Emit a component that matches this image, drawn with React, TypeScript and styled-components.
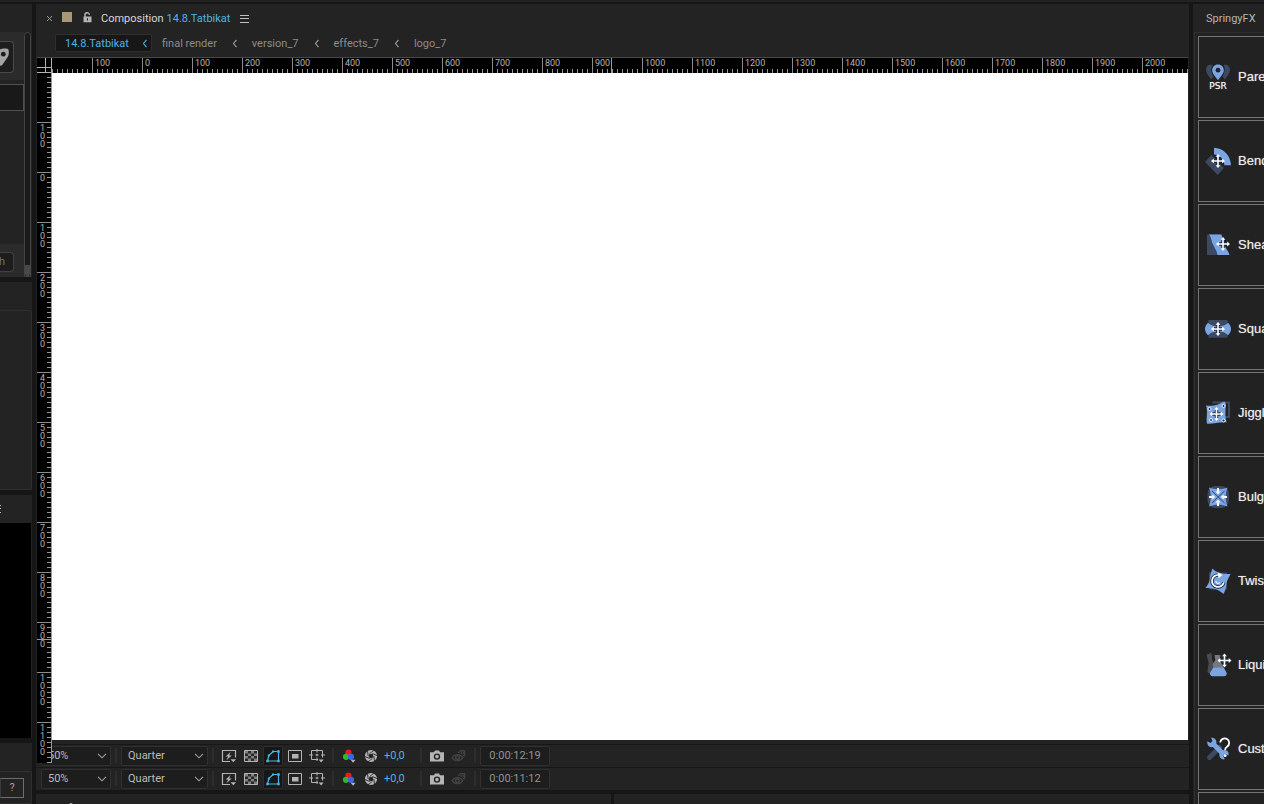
import React from "react";
import styled, { createGlobalStyle } from "styled-components";

const c = {
  gap: "#161616",
  panel: "#232323",
  raised: "#2b2b2b",
  sunken: "#1d1d1d",
  edge: "#303030",
  text: "#a0a0a0",
  bright: "#d6d6d6",
  blue: "#4bb4e6",
  icon: "#b4b4b4",
  springBlue: "#7ba4e2",
  springDark: "#3d4961",
};

const GlobalStyle = createGlobalStyle`
  *, *::before, *::after { box-sizing: border-box; }
  html, body { margin: 0; height: 100%; overflow: hidden; background: ${c.gap}; }
  body { font: 11px/16px Roboto, "Open Sans", sans-serif; color: ${c.text}; }
  button, select, input { font: inherit; color: inherit; margin: 0; }
  svg { display: block; flex: none; }
`;

/* ---------- shell ---------- */

const Shell = styled.div`
  display: flex;
  flex-direction: column;
  height: 100vh;
  overflow: hidden;
`;

const TopStrip = styled.div`
  flex: none;
  height: 2px;
  margin-bottom: 2px;
  background: ${c.panel};
`;

const Workspace = styled.div`
  flex: 1;
  min-height: 0;
  display: grid;
  grid-template-columns: 32px minmax(0, 1fr) 71px;
  column-gap: 4px;
`;

/* ---------- left column ---------- */

const SideColumn = styled.aside`
  display: flex;
  flex-direction: column;
  gap: 5px;
  min-height: 0;
  overflow: hidden;
`;

const SidePanel = styled.section<{ $height?: number }>`
  flex: ${(p) => (p.$height ? "none" : "1")};
  height: ${(p) => (p.$height ? p.$height + "px" : "auto")};
  min-height: 0;
  display: flex;
  flex-direction: column;
  overflow: hidden;
  background: ${c.panel};
`;

const Scroller = styled.div`
  flex: 1;
  display: flex;
  margin-top: 28px;
`;

const ScrollBody = styled.div`
  width: 24px;
  display: flex;
  flex-direction: column;
  justify-content: space-between;
`;

const Band = styled.div<{ $top: number; $bottom: number }>`
  background: ${c.raised};
  padding: ${(p) => p.$top}px 0 ${(p) => p.$bottom}px;
`;

const KeyButton = styled.button`
  display: flex;
  align-items: center;
  width: 14px;
  height: 32px;
  padding: 0;
  border: 1px solid #4a4a4a;
  border-left: 0;
  border-radius: 0 4px 4px 0;
  background: ${c.sunken};
`;

const SideInput = styled.input`
  display: block;
  width: 24px;
  height: 27px;
  margin-top: 4px;
  padding: 0;
  border: 1px solid #505050;
  border-left: 0;
  background: #191919;
`;

const ClippedButton = styled.button`
  display: flex;
  justify-content: flex-end;
  align-items: center;
  width: 14px;
  height: 20px;
  padding: 0 8px 0 0;
  overflow: hidden;
  border: 1px solid #404040;
  border-left: 0;
  border-radius: 0 4px 4px 0;
  background: ${c.sunken};
  color: #707070;
`;

const ScrollTrack = styled.div`
  display: flex;
  flex-direction: column;
  justify-content: flex-end;
  width: 7px;
  border: 1px solid #444;
  border-radius: 4px 4px 0 0;
  background: #1b1b1b;
`;

const ScrollThumb = styled.div`
  height: 11px;
  background: #484848;
  border-radius: 0 0 2px 2px;
`;

const FramedBody = styled.div`
  flex: 1;
  margin-top: 28px;
  border: 1px solid ${c.edge};
  border-left: 0;
  border-radius: 0 2px 2px 0;
`;

const PreviewHead = styled.div`
  height: 28px;
  display: flex;
  align-items: center;
`;

const Preview = styled.div`
  flex: 1;
  margin-right: 1px;
  background: #000;
`;

const HelpButton = styled.button`
  display: block;
  width: 24px;
  height: 20px;
  margin-top: 6px;
  padding: 0;
  border: 1px solid #6e6e6e;
  border-left-color: #3a3a3a;
  background: ${c.panel};
`;

/* ---------- composition panel ---------- */

const Main = styled.main`
  display: flex;
  flex-direction: column;
  min-width: 0;
  min-height: 0;
`;

const CompPanel = styled.section`
  flex: 1;
  min-height: 0;
  display: flex;
  flex-direction: column;
  background: ${c.panel};
`;

const TabRow = styled.header`
  flex: none;
  display: flex;
  align-items: center;
  height: 28px;
  padding: 1px 0 0 10px;
`;

const PlainButton = styled.button`
  display: flex;
  align-items: center;
  padding: 0;
  border: 0;
  background: none;
  white-space: nowrap;
`;

const Swatch = styled.span`
  width: 10px;
  height: 10px;
  margin: 0 11px 3px 9px;
  background: #a99877;
`;

const LockButton = styled(PlainButton)`
  padding-bottom: 3px;
`;

const TabTitle = styled.h1`
  display: flex;
  gap: 3px;
  margin: 0 10px 0 9px;
  font: inherit;
  color: ${c.bright};
  white-space: nowrap;
`;

const Accent = styled.span`
  color: ${c.blue};
`;

const Crumbs = styled.nav`
  flex: none;
  display: flex;
  align-items: center;
  gap: 14px;
  height: 24px;
  padding: 2px 0 4px 19px;
`;

const Crumb = styled(PlainButton)`
  padding: 1px 1px 0 0;
  color: #8c8c8c;
`;

const CurrentCrumb = styled(PlainButton)`
  justify-content: space-between;
  width: 97px;
  height: 18px;
  margin-right: -4px;
  padding: 1px 3px 0 9px;
  border: 1px solid #2f2f2f;
  border-radius: 2px;
  background: #171717;
  color: ${c.blue};
`;

const Viewer = styled.div`
  flex: 1;
  min-height: 0;
  display: grid;
  grid-template: 15px minmax(0, 1fr) / 15px minmax(0, 1fr);
  margin: 1px 1px 4px;
  border-top: 1px solid #484848;
`;

const Corner = styled.div`
  background: #000;
`;

const tick = "#989898";

const RulerX = styled.div`
  position: relative;
  display: flex;
  padding-left: 40px;
  overflow: hidden;
  background: linear-gradient(90deg, ${tick} 1px, transparent 1px) 0 100% / 5px 4px repeat-x #000;
`;

const MarkX = styled.span`
  flex: none;
  width: 50px;
  padding-left: 2px;
  border-left: 1px solid #8c8c8c;
  font-size: 9px;
  line-height: 11px;
  color: #b4b4b4;
`;

const CursorX = styled.i`
  position: absolute;
  top: 0;
  bottom: 0;
  left: 559px;
  width: 1px;
  background: ${c.blue};
`;

/* The vertical ruler hangs over the first footer bar. */
const RulerY = styled.div`
  position: relative;
  z-index: 1;
  margin-bottom: -23px;
  padding-top: 49px;
  overflow: hidden;
  border-right: 1px solid ${tick};
  background: linear-gradient(${tick} 1px, transparent 1px) 100% 4px / 4px 5px repeat-y #000;
`;

const MarkY = styled.span`
  display: block;
  height: 50px;
  padding: 1px 0 0 3px;
  border-top: 1px solid #8c8c8c;
  font-size: 9px;
  line-height: 8px;
  color: #b4b4b4;
`;

const Stacked = styled.span`
  display: block;
  width: 6px;
  word-break: break-all;
`;

const CursorY = styled.i`
  position: absolute;
  left: 0;
  right: 0;
  top: 566px;
  height: 1px;
  background: ${c.blue};
`;

const Canvas = styled.div`
  background: #fff;
`;

const Bar = styled.div`
  flex: none;
  display: flex;
  align-items: center;
  height: 23px;
  padding: 0 0 1px 5px;
  border-top: 1px solid #171717;
`;

const Picker = styled.label<{ $width: number }>`
  position: relative;
  display: flex;
  width: ${(p) => p.$width}px;
`;

const PickerSelect = styled.select`
  width: 100%;
  height: 20px;
  padding: 0 20px 0 6px;
  appearance: none;
  border: 1px solid ${c.edge};
  border-radius: 2px;
  background: ${c.sunken};
  color: #bcbcbc;
`;

const PickerArrow = styled.svg`
  position: absolute;
  top: 7px;
  right: 4px;
  pointer-events: none;
`;

const Rule = styled.i`
  width: 2px;
  height: 15px;
  margin: 0 4px;
  background: #2d2d2d;
`;

const Group = styled.div`
  display: flex;
  gap: 2px;
  padding: 0 1px;
`;

const ToolButton = styled.button<{ $on?: boolean }>`
  display: flex;
  align-items: center;
  justify-content: center;
  width: 20px;
  height: 20px;
  padding: 0;
  border: 1px solid ${(p) => (p.$on ? "#2c2c2c" : "transparent")};
  border-radius: 2px;
  background: ${(p) => (p.$on ? "#171717" : "none")};
`;

const Exposure = styled.button`
  width: 32px;
  height: 20px;
  padding: 0 0 0 1px;
  border: 0;
  background: none;
  color: ${c.blue};
  text-align: left;
`;

const TimeButton = styled.button`
  width: 70px;
  height: 20px;
  padding: 0;
  border: 1px solid ${c.edge};
  border-radius: 2px;
  background: ${c.sunken};
  color: #929292;
`;

const LowerPanels = styled.div`
  flex: none;
  display: grid;
  grid-template-columns: 1fr 1fr;
  gap: 3px;
  height: 10px;
  margin-top: 4px;
`;

const LowerPanel = styled.section`
  padding: 8px 0 0 32px;
  overflow: hidden;
  background: ${c.panel};
`;

/* ---------- SpringyFX panel ---------- */

const SpringPanel = styled.aside`
  display: flex;
  flex-direction: column;
  min-height: 0;
  overflow: hidden;
  background: ${c.panel};
`;

const SpringTitle = styled.h2`
  flex: none;
  height: 28px;
  margin: 0;
  padding: 1px 0 0 13px;
  font: inherit;
  line-height: 28px;
  color: #b4b4b4;
`;

const SpringList = styled.div`
  flex: 1;
  display: flex;
  flex-direction: column;
  gap: 2px;
  margin-left: 1px;
  padding: 3px 0 0 3px;
  border: 1px solid #2e2e2e;
  border-width: 1px 0 0 1px;
`;

const SpringButton = styled.button`
  flex: none;
  display: flex;
  align-items: center;
  gap: 6px;
  width: 180px;
  height: 82px;
  padding: 0 5px;
  border: 1px solid #747474;
  background: #222;
  color: #ececec;
  font: 13px/16px "Liberation Sans", Arial, sans-serif;
  text-shadow: 0 0 1px #999;
`;

/* ---------- drawings ---------- */

const Arrow = () => (
  <svg width="6" height="9" viewBox="0 0 6 9" fill="none" stroke="currentColor" strokeWidth="1.1">
    <path d="M4.5 .8 1.5 4.5 4.5 8.2" />
  </svg>
);

const Lines = () => (
  <svg width="9" height="8" viewBox="0 0 9 8" fill="#bdbdbd">
    <path d="M0 0h9v1H0zM0 3h9v1H0zM0 7h9v1H0z" />
  </svg>
);

const Lock = () => (
  <svg width="9" height="11" viewBox="0 0 9 11">
    <path d="M2 5V3.2a2.2 2.2 0 0 1 4.4-.4" fill="none" stroke="#b4b4b4" strokeWidth="1.4" />
    <path d="M.5 4.6h8v5.6h-8zM4 6.2v2.4h1V6.2z" fill="#b4b4b4" fillRule="evenodd" />
  </svg>
);

const FastPreview = () => (
  <svg width="16" height="14" viewBox="0 0 16 14">
    <path d="M9 12.5H1.5v-11h13v7" fill="none" stroke={c.icon} strokeWidth="1.2" />
    <path d="M9.6 3 4.6 7.6h2.6L5.4 11.2l5.4-4.800H8.100z" fill={c.icon} />
    <path d="M9.500 10.200h5.500l-2.700 3z" fill={c.icon} />
  </svg>
);

const Checker = () => (
  <svg width="14" height="12" viewBox="0 0 14 12">
    <path d="M.5.5h13v11H.5z" fill="#2a2a2a" stroke={c.icon} />
    <path
      d="M1 1h3v2.500H1zM7 1h3v2.500H7zM4 3.500h3V6H4zM10 3.500h3V6h-3zM1 6h3v2.500H1zM7 6h3v2.500H7zM4 8.500h3V11H4zM10 8.500h3V11h-3z"
      fill="#808080"
    />
  </svg>
);

const MaskShape = () => (
  <svg width="14" height="14" viewBox="0 0 14 14">
    <path d="M1.500 12 2.800 6.500 7 2.500h5.500V12z" fill="none" stroke={c.blue} strokeWidth="1.200" />
    <path
      d="M.300 10.800h2.400v2.400H.3zM11.300 10.800h2.400v2.400h-2.400zM11.300 1.300h2.400v2.400h-2.400zM6 1.500h2v2H6zM1.800 5.500h2v2h-2z"
      fill={c.blue}
    />
  </svg>
);

const Region = () => (
  <svg width="14" height="12" viewBox="0 0 14 12">
    <path d="M.5.5h13v11H.5z" fill="none" stroke={c.icon} />
    <path d="M4 4h6.500v4.500H4z" fill={c.icon} />
  </svg>
);

const Guides = () => (
  <svg width="16" height="14" viewBox="0 0 16 14">
    <path d="M9 10.500H2.500v-9h11v7" fill="none" stroke={c.icon} />
    <path d="M0 6h4M6.500 6h3M12 6h4M8 0v3.500M8 4.800v2.400M8 8.500v3.500" fill="none" stroke={c.icon} />
    <path d="M9.600 10.500h5l-2.500 3z" fill={c.icon} />
  </svg>
);

const Channels = () => (
  <svg width="14" height="14" viewBox="0 0 14 14">
    <circle cx="6.4" cy="3.500" r="3.1" fill="#f01818" />
    <circle cx="4" cy="7.8" r="3.1" fill="#2eb82e" />
    <circle cx="9" cy="7.8" r="3.1" fill="#3c66f0" />
    <path d="M8.6 10.700h5l-2.500 3z" fill={c.icon} />
  </svg>
);

const Aperture = () => (
  <svg width="14" height="14" viewBox="0 0 14 14">
    <circle cx="7" cy="7" r="4.2" fill="none" stroke={c.icon} strokeWidth="3.8" />
    {[0, 60, 120, 180, 240, 300].map((a) => (
      <path key={a} d="M5.500 4.600 10 1.200" stroke="#232323" strokeWidth=".8" transform={`rotate(${a} 7 7)`} />
    ))}
  </svg>
);

const Camera = () => (
  <svg width="14" height="12" viewBox="0 0 14 12">
    <path d="M0 2.200h4L5 .4h4l1 1.800h4v9.200H0z" fill={c.icon} />
    <circle cx="7" cy="6.600" r="2.500" fill="none" stroke="#232323" strokeWidth="1.400" />
  </svg>
);

const ShowSnapshot = () => (
  <svg width="16" height="14" viewBox="0 0 16 14" fill="none" stroke="#424242">
    <path d="M1 8.600c2.400-4 8.400-4 10.800 0-2.400 4-8.400 4-10.800 0z" strokeWidth="1.400" />
    <circle cx="6.400" cy="8.600" r="1.800" strokeWidth="1.600" />
    <path d="M7 3.400h1.400L9.400 1.600h4.200v5h-1.800" strokeWidth="1.300" />
    <circle cx="11.400" cy="4" r="1.200" />
  </svg>
);

const KeyGlyph = () => (
  <svg width="10" height="22" viewBox="0 0 10 22">
    <path d="M0 3.500C1.600 2.400 8 2.200 8.400 3.400c1 2.600.4 6.200-1 8.200L2.600 18.400C2 19.400.8 19.800 0 19.600z" fill="#a4a4a4" />
    <circle cx="3.300" cy="8.200" r="2.400" fill="#1d1d1d" />
  </svg>
);

const Move = ({ x, y }: { x: number; y: number }) => (
  <g transform={`translate(${x} ${y})`}>
    <path d="M-5 0H5M0-5V5" stroke="#1c2a44" strokeWidth="3.4" />
    <path d="M-5 0H5M0-5V5" stroke="#fff" strokeWidth="1.6" />
    <path
      d="M0-7 2.400-4.200h-4.800zM0 7 2.400 4.200h-4.800zM-7 0-4.200-2.400v4.800zM7 0 4.200-2.400v4.800z"
      fill="#fff"
    />
  </g>
);

const B = c.springBlue;
const D = c.springDark;

const springIcons: Record<string, React.ReactNode> = {
  Parent: (
    <>
      <path d="M8.500 2C4.600 1 2 3.200 2 7c0 3.400 3 6.200 5 9.500l2.500-3C7 10 6.500 5 8.500 2z" fill={D} />
      <path d="M19.500 2C23.400 1 26 3.200 26 7c0 3.400-3 6.200-5 9.500l-2.500-3C21 10 21.500 5 19.500 2z" fill={D} />
      <path d="M14 1.500c3.400 0 5.800 2.400 5.800 5.700 0 3.600-3.400 6.300-5.800 10.100-2.400-3.800-5.800-6.500-5.800-10.100 0-3.300 2.400-5.700 5.800-5.700z" fill={B} />
      <circle cx="14" cy="7.200" r="2.400" fill="#1c2230" />
      <text x="14" y="26" textAnchor="middle" fontFamily="DejaVu Sans" fontSize="9" fill="#fff">
        PSR
      </text>
    </>
  ),
  Bend: (
    <>
      <path d="M1 15l6.500-7L20 21l-6.300 7z" fill={D} />
      <path d="M10 .8c9.500.3 16.700 7.700 17 17.500h-6.500C20 12 16 8 10 7.500z" fill={B} />
      <Move x={14} y={14} />
    </>
  ),
  Shear: (
    <>
      <path d="M3 3.500h13V24H3z" fill={D} />
      <path d="M5 3.500h12.500c1.500 3.500 1 7.500 3 11 1.500 3.200 4 5.500 5 9.500H13.500C13 19.500 10.500 17 9 13.500 7.200 10 7.500 6.500 5 3.500z" fill={B} />
      <Move x={19} y={13} />
    </>
  ),
  Squash: (
    <>
      <path d="M4.500 5h19v17.700h-19z" fill={D} />
      <path d="M4 7.800C6.500 10.500 10 11.500 14 11.500s7.500-1 10-3.700c4 3.500 4 8.900 0 12.400-2.500-2.700-6-3.700-10-3.700s-7.500 1-10 3.700c-4-3.500-4-8.900 0-12.400z" fill={B} />
      <Move x={14} y={14} />
    </>
  ),
  Jiggle: (
    <>
      <path d="M8.500 3.500H25V18h-6" fill="none" stroke={D} strokeWidth="2" />
      <path d="M2 6.500c7.500 1 12-.5 18-4 3 1 1.500 5 1.500 8.500s-.5 8.500 1.200 12.500c-6-1-13 1.800-19.700 1.300-1.200-5.300 1.200-12.300-1-18.300z" fill={B} />
      {[[5.5, 10], [19.5, 7], [7, 21], [19.5, 21.5]].map(([x, y]) => (
        <circle key={x + "-" + y} cx={x} cy={y} r="1.5" fill="#24324e" stroke="#fff" strokeWidth=".9" />
      ))}
      <Move x={12.5} y={15} />
    </>
  ),
  Bulge: (
    <>
      <rect x="3.500" y="3" width="21.500" height="22" rx="8" fill={D} />
      <path d="M5 4.500c5.500 2.300 13 2.300 18.500 0-2.300 5.500-2.300 13.500 0 19-5.500-2.300-13-2.300-18.500 0 2.300-5.500 2.300-13.500 0-19z" fill={B} />
      <path d="M8 8l12.500 12M20.500 8 8 20" stroke="#2d4470" strokeWidth="1" />
      {[0, 90, 180, 270].map((a) => (
        <g key={a} transform={`rotate(${a} 14 14)`}>
          <path d="M14 5v3.600" stroke="#fff" strokeWidth="2" />
          <path d="M11.400 8.400h5.200L14 11.200z" fill="#fff" />
        </g>
      ))}
    </>
  ),
  Twist: (
    <>
      <path d="M5 5.500h18v17H5z" fill={D} />
      <path d="M8.500 1.500c3.500 4 9.500 6 18 5.500-1.500 3.500-3.500 6-4 9.500-.4 3.500-.8 6.500-3 10.500-4.500-4.500-10.500-6-18-6C4 17.500 5.500 15 6 11.500 6.400 8 7 5 8.500 1.500z" fill={B} />
      <path d="M14.500 8A6 6 0 1 0 19.800 15.500" fill="none" stroke="#22304c" strokeWidth="3.600" />
      <path d="M14.500 8A6 6 0 1 0 19.800 15.500" fill="none" stroke="#fff" strokeWidth="1.700" />
      <path d="M13.500 5.200l5 2.500-3.800 3.600z" fill="#fff" />
      <path d="M11.800 14a2.400 2.400 0 0 0 4.200 1.500" fill="none" stroke="#fff" strokeWidth="1.100" />
    </>
  ),
  Liquify: (
    <>
      <path d="M2.500 3.500l5-1.500.8 7 3 6.500L7 22.500c-2 .8-4-.5-3.500-3l1.200-7.500z" fill="#4a4c52" />
      <path d="M10.500 4h5.800l-.3 6 3.300 6-8.800 2-2-4.500 2.800-4.500z" fill="#76787e" />
      <path d="M9.500 16.300c3.500 1.500 6.500-.8 10 0l3 5.200c.8 2-.3 3.700-2.500 3.700H8.700c-2.200 0-3.300-1.700-2.500-3.700z" fill={B} />
      <Move x={20.5} y={9.5} />
    </>
  ),
  Custom: (
    <>
      <path d="M5.500 22.500l10-10" stroke={D} strokeWidth="5" strokeLinecap="round" />
      <path d="M3.300 6.200l3.200 1.700 2-1.800-1.400-3.300c3.700-.3 6 2.400 5.200 5.700l6.800 6.800c3.300-1 6.300 1.300 5.400 5.200l-3-1.400-2.200 1.900 1.500 3.300c-3.800.6-6-2.200-5.300-5.500L8.800 12c-3.500.9-6-2-5.500-5.800z" fill={B} />
      <path d="M16.200 7.500a4.500 4.500 0 1 1 6.800 4.200c-1.500.9-1.900 1.700-1.900 3.300" fill="none" stroke="#fff" strokeWidth="1.800" />
      <circle cx="21.200" cy="20.700" r="1.400" fill="#fff" />
    </>
  ),
};

const springTools = ["Parent", "Bend", "Shear", "Squash", "Jiggle", "Bulge", "Twist", "Liquify", "Custom", "About"];

const parentComps = ["final render", "version_7", "effects_7", "logo_7"];

const marksX = Array.from({ length: 22 }, (_, i) => Math.abs(i * 100 - 100));
const marksY = Array.from({ length: 13 }, (_, i) => Math.abs(i * 100 - 100));

const DropArrow = () => (
  <PickerArrow width="10" height="6" viewBox="0 0 10 6" fill="none" stroke="#a0a0a0" strokeWidth="1.1">
    <path d="M1 .8l4 4 4-4" />
  </PickerArrow>
);

function FooterBar({ time, name }: { time: string; name: string }) {
  return (
    <Bar role="toolbar" aria-label={name}>
      <Picker $width={70}>
        <PickerSelect aria-label="Magnification" defaultValue="50%">
          <option>50%</option>
          <option>100%</option>
        </PickerSelect>
        <DropArrow />
      </Picker>
      <Rule />
      <Picker $width={87}>
        <PickerSelect aria-label="Resolution" defaultValue="Quarter">
          <option>Full</option>
          <option>Half</option>
          <option>Quarter</option>
        </PickerSelect>
        <DropArrow />
      </Picker>
      <Rule />
      <Group>
        <ToolButton aria-label="Fast previews"><FastPreview /></ToolButton>
        <ToolButton aria-label="Transparency grid"><Checker /></ToolButton>
        <ToolButton $on aria-pressed="true" aria-label="Mask and shape paths"><MaskShape /></ToolButton>
        <ToolButton aria-label="Region of interest"><Region /></ToolButton>
        <ToolButton aria-label="Grid and guides"><Guides /></ToolButton>
      </Group>
      <Rule />
      <Group>
        <ToolButton aria-label="Channels"><Channels /></ToolButton>
        <ToolButton aria-label="Reset exposure"><Aperture /></ToolButton>
        <Exposure>+0,0</Exposure>
      </Group>
      <Rule />
      <Group>
        <ToolButton aria-label="Take snapshot"><Camera /></ToolButton>
        <ToolButton aria-label="Show snapshot"><ShowSnapshot /></ToolButton>
      </Group>
      <Rule />
      <TimeButton>{time}</TimeButton>
    </Bar>
  );
}

export default function App() {
  return (
    <Shell>
      <GlobalStyle />
      <TopStrip />
      <Workspace>
        <SideColumn>
          <SidePanel $height={273}>
            <Scroller>
              <ScrollBody>
                <div>
                  <Band $top={9} $bottom={7}>
                    <KeyButton aria-label="Key"><KeyGlyph /></KeyButton>
                  </Band>
                  <SideInput aria-label="Value" />
                </div>
                <Band $top={8} $bottom={5}>
                  <ClippedButton>h</ClippedButton>
                </Band>
              </ScrollBody>
              <ScrollTrack><ScrollThumb /></ScrollTrack>
            </Scroller>
          </SidePanel>
          <SidePanel $height={208}>
            <FramedBody />
          </SidePanel>
          <SidePanel>
            <PreviewHead>
              <svg width="2" height="8" viewBox="0 0 2 8" fill="#bdbdbd">
                <path d="M0 0h1v1H0zM0 3h1v1H0zM0 7h1v1H0z" />
              </svg>
            </PreviewHead>
            <Preview />
          </SidePanel>
          <SidePanel $height={61}>
            <FramedBody>
              <HelpButton>?</HelpButton>
            </FramedBody>
          </SidePanel>
        </SideColumn>

        <Main>
          <CompPanel>
            <TabRow>
              <PlainButton aria-label="Close tab">
                <svg width="7" height="7" viewBox="0 0 7 7" stroke="#989898">
                  <path d="M1 1l5 5M6 1L1 6" />
                </svg>
              </PlainButton>
              <Swatch />
              <LockButton aria-label="Lock"><Lock /></LockButton>
              <TabTitle>
                Composition <Accent>14.8.Tatbikat</Accent>
              </TabTitle>
              <PlainButton aria-label="Panel menu"><Lines /></PlainButton>
            </TabRow>
            <Crumbs aria-label="Composition flowchart">
              <CurrentCrumb>
                14.8.Tatbikat <Arrow />
              </CurrentCrumb>
              {parentComps.map((name, i) => (
                <React.Fragment key={name}>
                  {i > 0 && <Arrow />}
                  <Crumb>{name}</Crumb>
                </React.Fragment>
              ))}
            </Crumbs>
            <Viewer>
              <Corner>
                <svg width="15" height="15" viewBox="0 0 15 15" fill="#b4b4b4">
                  <path d="M8 0h1v15H8zM0 9h15v1H0zM14 0h1v15h-1zM0 14h15v1H0z" />
                </svg>
              </Corner>
              <RulerX>
                {marksX.map((n, i) => (
                  <MarkX key={i}>{n}</MarkX>
                ))}
                <CursorX />
              </RulerX>
              <RulerY>
                {marksY.map((n, i) => (
                  <MarkY key={i}>
                    <Stacked>{n}</Stacked>
                  </MarkY>
                ))}
                <CursorY />
              </RulerY>
              <Canvas />
            </Viewer>
            <FooterBar name="Viewer" time="0:00:12:19" />
            <FooterBar name="Composition" time="0:00:11:12" />
          </CompPanel>
          <LowerPanels>
            <LowerPanel>
              <svg width="6" height="4" viewBox="0 0 6 4">
                <path d="M1 4V3.500a2 2 0 0 1 4 0" fill="none" stroke="#b4b4b4" />
              </svg>
            </LowerPanel>
            <LowerPanel />
          </LowerPanels>
        </Main>

        <SpringPanel>
          <SpringTitle>SpringyFX</SpringTitle>
          <SpringList>
            {springTools.map((name) => (
              <SpringButton key={name}>
                <svg width="28" height="28" viewBox="0 0 28 28">
                  {springIcons[name]}
                </svg>
                {name}
              </SpringButton>
            ))}
          </SpringList>
        </SpringPanel>
      </Workspace>
    </Shell>
  );
}
